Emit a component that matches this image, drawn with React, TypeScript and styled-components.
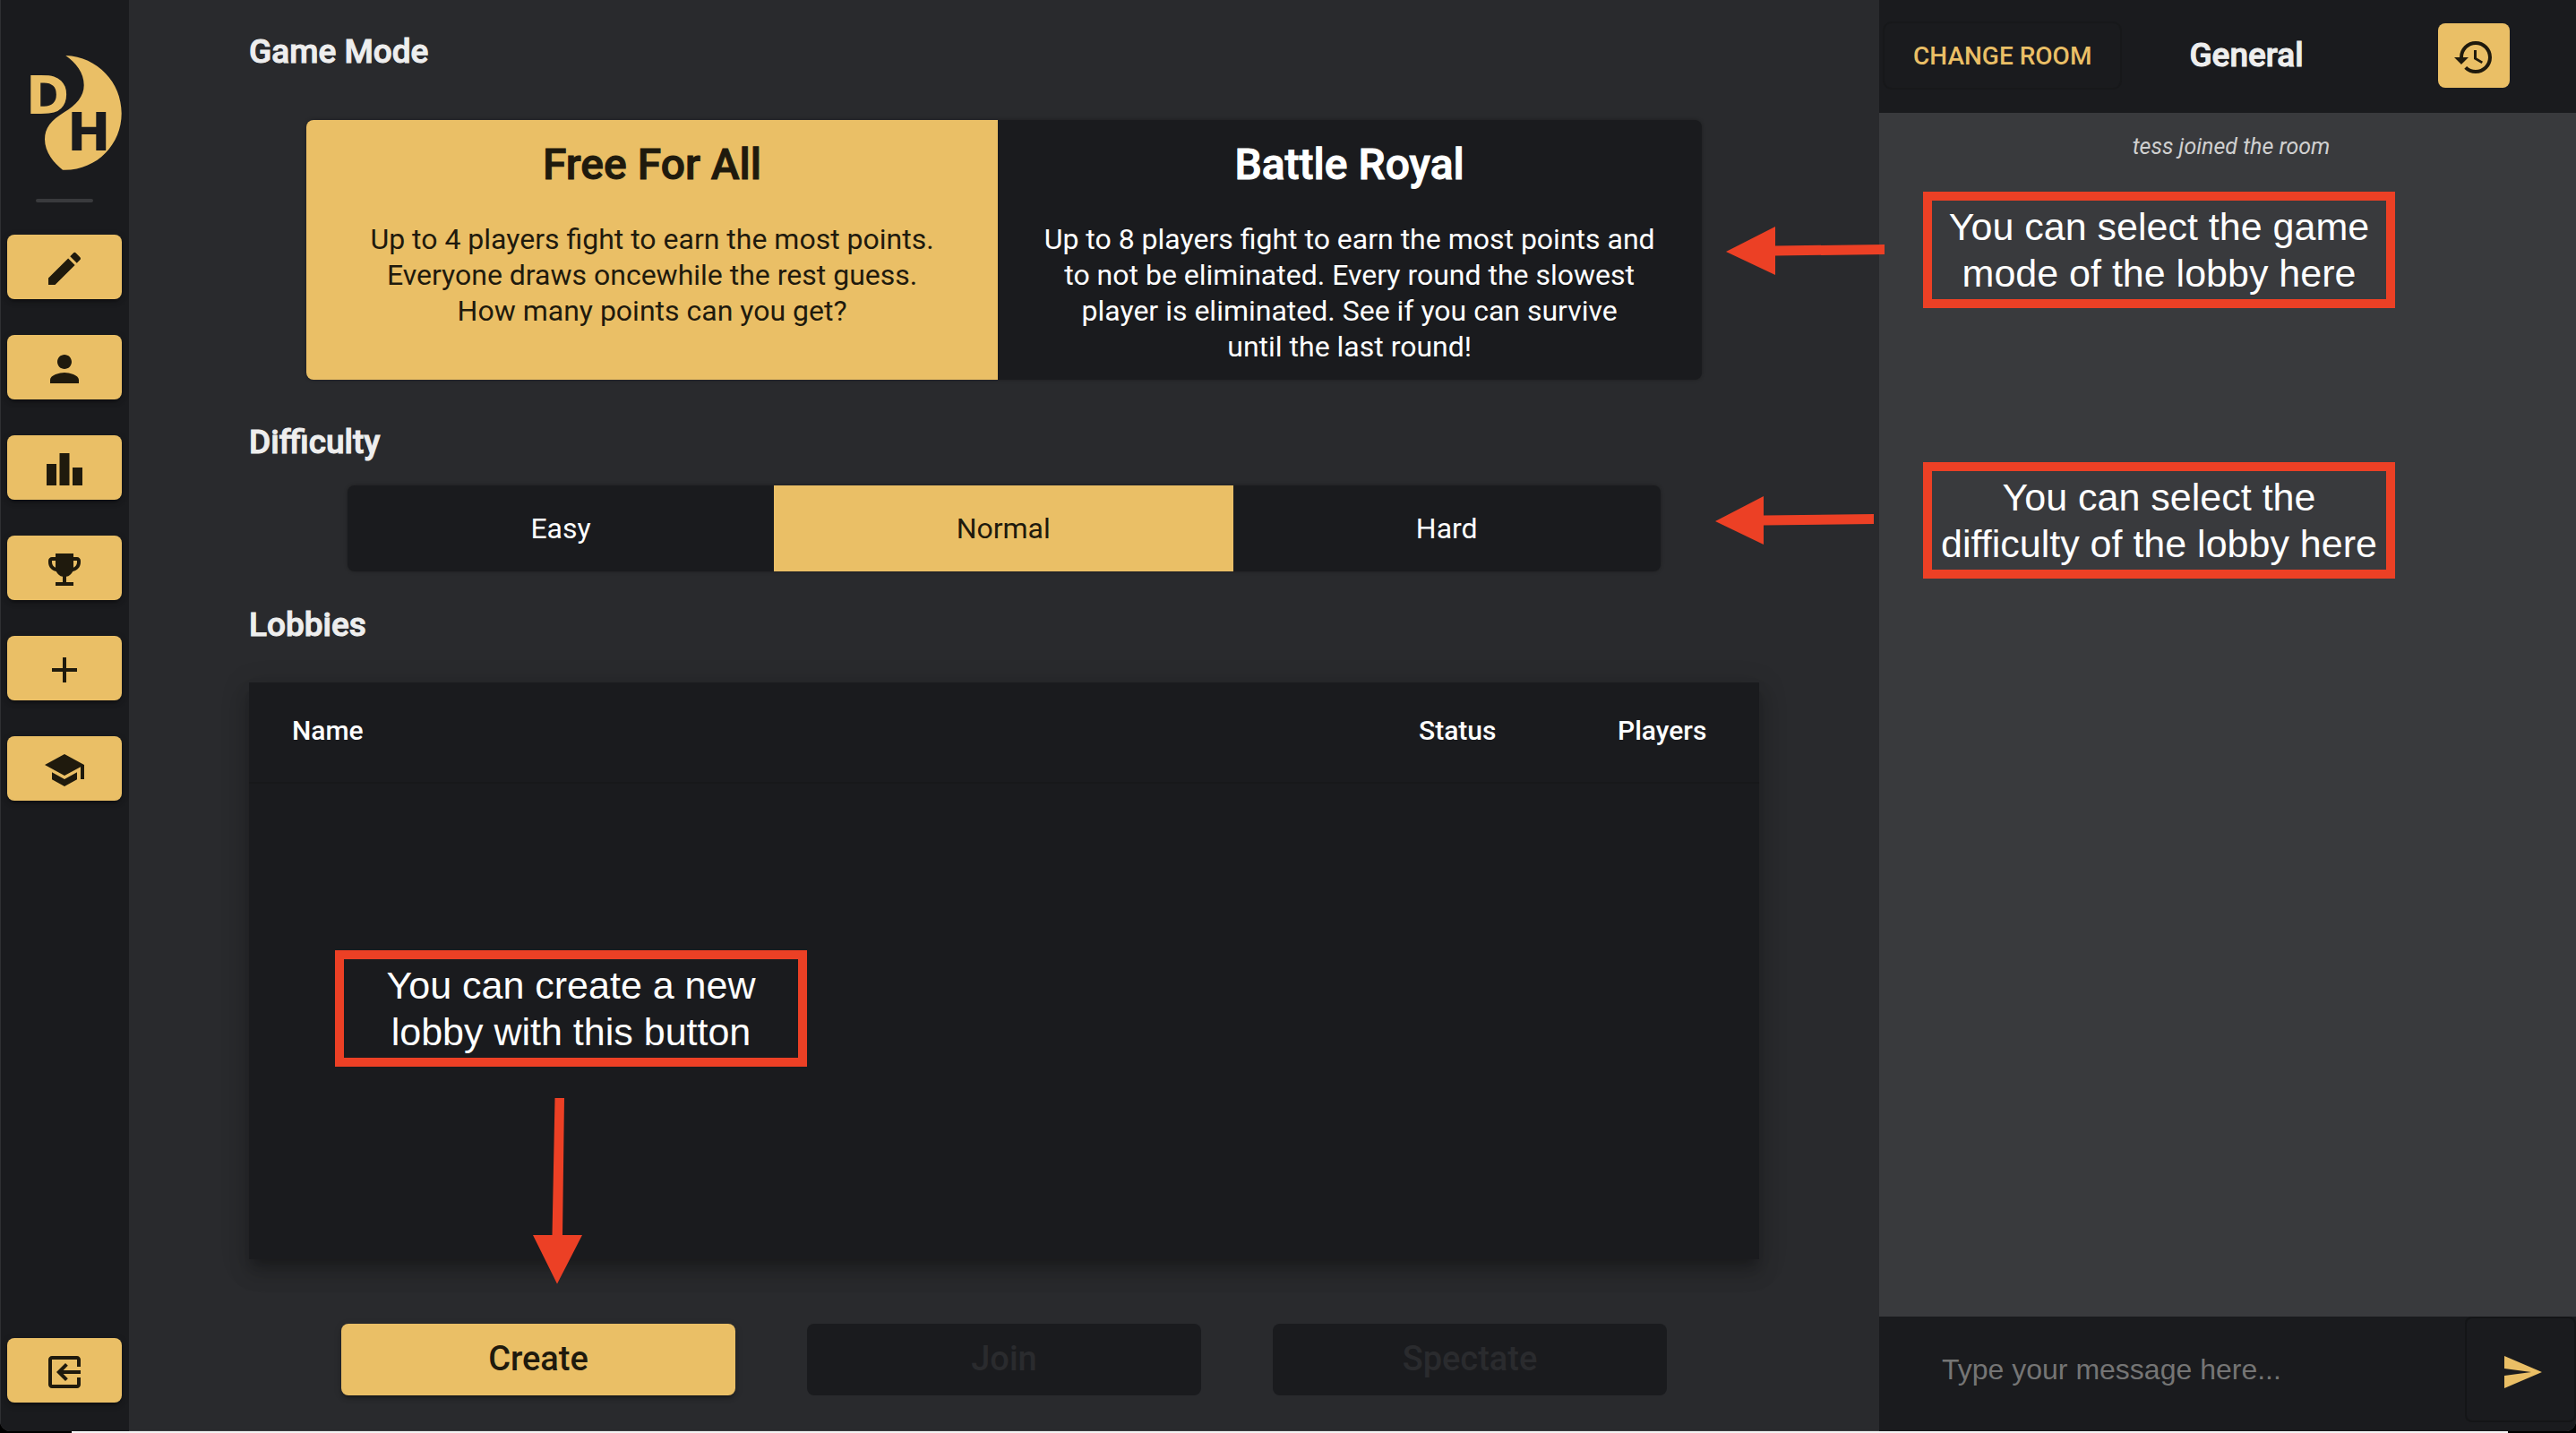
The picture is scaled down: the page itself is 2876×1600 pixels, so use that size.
import React, { useState } from "react";
import styled, { createGlobalStyle, css } from "styled-components";

const color = {
  panel: "#1a1b1e",
  page: "#292a2d",
  chat: "#393a3d",
  gold: "#eabf66",
  ink: "#1f1a0d",
  text: "#eeeeee",
  note: "#ec4025",
};

const raised =
  "0 6px 2px -4px rgba(0,0,0,.2), 0 4px 4px 0 rgba(0,0,0,.14), 0 2px 10px 0 rgba(0,0,0,.12)";

/* Medium Roboto thickened into a bold, keeping the narrower letter widths */
const heavy = css`
  font-weight: 500;
  -webkit-text-stroke: 1px currentColor;
`;

const GlobalStyle = createGlobalStyle`
  *, *::before, *::after { box-sizing: border-box; }
  body {
    margin: 0;
    background: #000;
    color: ${color.text};
    font-family: Roboto, "Liberation Sans", sans-serif;
    overflow: hidden;
  }
  button, input { font: inherit; border: 0; margin: 0; }
  button { cursor: pointer; }
  button:disabled { cursor: default; }
  h1, h2, h3, p { margin: 0; }
`;

const Screen = styled.div`
  position: relative;
  display: flex;
  flex-direction: column;
  height: 100vh;
`;

const Desk = styled.div`
  flex: none;
  height: 2px;
  margin: 0 76px 0 80px;
  background: #f4f4f4;
`;

const Window = styled.div`
  flex: 1;
  min-height: 0;
  display: grid;
  grid-template-columns: 144px 1fr 778px;
  background: ${color.page};
  border-radius: 0 0 12px 12px;
  box-shadow: inset 1px -1px 0 #3c3d40;
  overflow: hidden;
`;

const Sidebar = styled.nav`
  display: flex;
  flex-direction: column;
  align-items: center;
  padding-bottom: 32px;
  background: ${color.panel};
  box-shadow: inset 1px 0 0 #2f3033;
`;

const Logo = styled.svg`
  display: block;
  width: 144px;
  height: 222px;
`;

const Divider = styled.hr`
  width: 64px;
  height: 4px;
  margin: 0 0 36px;
  border: 0;
  border-radius: 2px;
  background: ${color.chat};
`;

const NavList = styled.div`
  display: flex;
  flex-direction: column;
  gap: 40px;
`;

const IconButton = styled.button<{ $width: number; $flat?: boolean }>`
  display: flex;
  align-items: center;
  justify-content: center;
  width: ${(p) => p.$width}px;
  height: 72px;
  padding: 4px 0 0;
  border-radius: 8px;
  background: ${color.gold};
  color: ${color.ink};
  box-shadow: ${(p) => (p.$flat ? "none" : raised)};
`;

const Spacer = styled.div`
  flex: 1;
`;

const Glyph = styled.svg`
  display: block;
  width: 48px;
  height: 48px;
  fill: currentColor;
`;

const Main = styled.main`
  display: flex;
  flex-direction: column;
  padding: 34px 134px 40px;
`;

const SectionTitle = styled.h2`
  font-size: 37px;
  line-height: 48px;
  ${heavy}
`;

const ToggleGroup = styled.div<{ $top: number; $bottom: number }>`
  align-self: center;
  display: flex;
  margin: ${(p) => p.$top}px 0 ${(p) => p.$bottom}px;
  border-radius: 8px;
  background: ${color.panel};
  box-shadow: 0 0 4px rgba(0, 0, 0, 0.3);
  overflow: hidden;
`;

const Toggle = styled.button`
  background: transparent;
  color: #fff;
  font-size: 32px;
  line-height: 40px;
  text-align: center;
  &[aria-pressed="true"] {
    background: ${color.gold};
    color: ${color.ink};
  }
`;

const ModeToggle = styled(Toggle)<{ $pad: number }>`
  display: flex;
  flex-direction: column;
  align-items: center;
  gap: 33px;
  height: 290px;
  padding: 20px ${(p) => p.$pad}px 0;
`;

const ModeTitle = styled.h3`
  font-size: 48px;
  line-height: 60px;
  ${heavy}
`;

const LevelToggle = styled(Toggle)`
  height: 96px;
  padding: 0 204px;
`;

const LobbyPanel = styled.div`
  flex: 1;
  margin-top: 40px;
  background: ${color.panel};
  box-shadow: 0 10px 10px -6px rgba(0, 0, 0, 0.2), 0 16px 20px 2px rgba(0, 0, 0, 0.14),
    0 6px 28px 4px rgba(0, 0, 0, 0.12);
`;

const Table = styled.table`
  width: 100%;
  border-collapse: collapse;
  table-layout: fixed;
`;

const HeadCell = styled.th<{ $width?: number; $left?: number }>`
  width: ${(p) => (p.$width ? `${p.$width}px` : "auto")};
  height: 112px;
  padding: 0 0 4px ${(p) => p.$left ?? 0}px;
  border-bottom: 2px solid #17181a;
  color: #fff;
  font-size: 30px;
  font-weight: 500;
  text-align: left;
`;

const Actions = styled.div`
  display: flex;
  justify-content: center;
  gap: 80px;
  margin-top: 72px;
`;

const ActionButton = styled.button`
  width: 440px;
  height: 80px;
  padding: 0 0 2px;
  border-radius: 8px;
  background: ${color.gold};
  color: ${color.ink};
  font-size: 38px;
  font-weight: 500;
  box-shadow: ${raised};
  &:disabled {
    background: ${color.panel};
    color: #2a2b2e;
    box-shadow: none;
  }
`;

const Chat = styled.aside`
  display: flex;
  flex-direction: column;
  background: ${color.chat};
`;

const ChatHeader = styled.header`
  display: flex;
  align-items: center;
  height: 126px;
  padding: 0 74px 2px 6px;
  background: ${color.panel};
`;

const RoomButton = styled.button`
  height: 72px;
  padding: 0 32px;
  border-radius: 8px;
  background: ${color.panel};
  color: ${color.gold};
  font-size: 28px;
  font-weight: 500;
  box-shadow: 0 0 0 2px #17181a;
`;

const RoomName = styled.h1`
  margin: 0 auto 0 77px;
  font-size: 37px;
  line-height: 48px;
  ${heavy}
`;

const Messages = styled.div`
  flex: 1;
  padding: 21px 0 0 8px;
`;

const SystemMessage = styled.p`
  color: #d0d0d0;
  font-size: 25px;
  line-height: 34px;
  font-style: italic;
  text-align: center;
`;

const Composer = styled.form`
  display: flex;
  height: 128px;
  background: ${color.panel};
`;

const MessageInput = styled.input`
  flex: 1;
  min-width: 0;
  height: 118px;
  padding: 0 20px 0 70px;
  background: transparent;
  color: ${color.text};
  font-family: "Liberation Sans", Arial, sans-serif;
  font-size: 32px;
  outline: 0;
  &::placeholder {
    color: #757575;
    opacity: 1;
  }
`;

const SendButton = styled.button`
  display: flex;
  align-items: center;
  justify-content: center;
  width: 124px;
  height: 118px;
  padding: 6px 0 0 4px;
  border-radius: 8px;
  background: ${color.panel};
  color: ${color.gold};
  box-shadow: inset 0 0 0 2px #141517;
`;

/* Guide notes that float over the screen */
const Note = styled.p<{ $top: number; $left?: number; $right?: number }>`
  position: absolute;
  top: ${(p) => p.$top}px;
  ${(p) => (p.$left !== undefined ? `left: ${p.$left}px;` : `right: ${p.$right}px;`)}
  width: 527px;
  height: 130px;
  padding-top: 3px;
  border: 10px solid ${color.note};
  color: #fff;
  font-family: "Liberation Sans", Arial, sans-serif;
  font-size: 43px;
  line-height: 52px;
  text-align: center;
  white-space: nowrap;
`;

const Arrow = styled.svg<{ $top: number; $left?: number; $right?: number }>`
  position: absolute;
  top: ${(p) => p.$top}px;
  ${(p) => (p.$left !== undefined ? `left: ${p.$left}px;` : `right: ${p.$right}px;`)}
  fill: ${color.note};
  pointer-events: none;
`;

const icons = {
  edit: "M3 17.25V21h3.75L17.81 9.94l-3.75-3.75L3 17.25zM20.71 7.04c.39-.39.39-1.02 0-1.41l-2.34-2.34a.996.996 0 0 0-1.41 0l-1.83 1.83 3.75 3.75 1.83-1.83z",
  person:
    "M12 12c2.21 0 4-1.79 4-4s-1.79-4-4-4-4 1.79-4 4 1.79 4 4 4zm0 2c-2.67 0-8 1.34-8 4v2h16v-2c0-2.66-5.33-4-8-4z",
  ranking: "M7.5 21H2V9h5.5v12zm7.25-18h-5.5v18h5.5V3zM22 11h-5.5v10H22V11z",
  trophy:
    "M19 5h-2V3H7v2H5c-1.1 0-2 .9-2 2v1c0 2.55 1.92 4.63 4.39 4.94.63 1.5 1.98 2.63 3.61 2.96V19H7v2h10v-2h-4v-3.1c1.63-.33 2.98-1.46 3.61-2.96C19.08 12.63 21 10.55 21 8V7c0-1.1-.9-2-2-2zM5 8V7h2v3.82C5.84 10.4 5 9.3 5 8zm14 0c0 1.3-.84 2.4-2 2.82V7h2v1z",
  add: "M19 13h-6v6h-2v-6H5v-2h6V5h2v6h6v2z",
  school: "M5 13.18v4L12 21l7-3.82v-4L12 17l-7-3.82zM12 3 1 9l11 6 9-4.91V17h2V9L12 3z",
  exit: "M13.91 15.59 12.5 17l-5-5 5-5 1.41 1.41L11.33 11H21v2h-9.67l2.58 2.59zM5 3h14c1.11 0 2 .9 2 2v4h-2V5H5v14h14v-4h2v4c0 1.1-.89 2-2 2H5c-1.1 0-2-.9-2-2V5c0-1.1.9-2 2-2z",
  history:
    "M13 3a9 9 0 0 0-9 9H1l3.89 3.89.07.14L9 12H6c0-3.87 3.13-7 7-7s7 3.13 7 7-3.13 7-7 7c-1.93 0-3.68-.79-4.94-2.06l-1.42 1.42A8.954 8.954 0 0 0 13 21a9 9 0 0 0 0-18zm-1 5v5l4.28 2.54.72-1.21-3.5-2.08V8H12z",
  send: "M2.01 21 23 12 2.01 3 2 10l15 2-15 2z",
};

type IconName = keyof typeof icons;

const Icon = ({ name }: { name: IconName }) => (
  <Glyph viewBox="0 0 24 24" aria-hidden="true">
    <path d={icons[name]} />
  </Glyph>
);

const navItems: { icon: IconName; label: string }[] = [
  { icon: "edit", label: "Draw" },
  { icon: "person", label: "Profile" },
  { icon: "ranking", label: "Leaderboard" },
  { icon: "trophy", label: "Trophies" },
  { icon: "add", label: "New drawing" },
  { icon: "school", label: "Tutorial" },
];

const modes = [
  {
    title: "Free For All",
    pad: 71,
    lines: [
      "Up to 4 players fight to earn the most points.",
      "Everyone draws oncewhile the rest guess.",
      "How many points can you get?",
    ],
  },
  {
    title: "Battle Royal",
    pad: 52,
    lines: [
      "Up to 8 players fight to earn the most points and",
      "to not be eliminated. Every round the slowest",
      "player is eliminated. See if you can survive",
      "until the last round!",
    ],
  },
];

const levels = ["Easy", "Normal", "Hard"];

const Lines = ({ lines }: { lines: string[] }) => (
  <>
    {lines.map((line, i) => (
      <React.Fragment key={line}>
        {i > 0 && <br />}
        {line}
      </React.Fragment>
    ))}
  </>
);

export default function App() {
  const [mode, setMode] = useState("Free For All");
  const [level, setLevel] = useState("Normal");
  const [message, setMessage] = useState("");

  return (
    <Screen>
      <GlobalStyle />
      <Window>
        <Sidebar>
          <Logo viewBox="0 0 144 222" role="img" aria-label="DH">
            <path
              fill={color.gold}
              d="M73.3 62C109 63.500 135.700 92 135.700 126.500C135.700 161 108 191 70 189.700C60 182 50 169.500 50 155.500C50 143 57 134.500 71.700 125.300C85 117 93.700 108 93.700 95C93.700 81.500 85 70 73.300 62Z"
            />
            <g fontFamily="DejaVu Sans, sans-serif" fontWeight="700" fontSize="58">
              <text x="29" y="127" fill={color.gold}>
                D
              </text>
              <text x="75" y="168" fill={color.panel}>
                H
              </text>
            </g>
          </Logo>
          <Divider />
          <NavList>
            {navItems.map((item) => (
              <IconButton key={item.icon} $width={128} aria-label={item.label}>
                <Icon name={item.icon} />
              </IconButton>
            ))}
          </NavList>
          <Spacer />
          <IconButton $width={128} aria-label="Log out">
            <Icon name="exit" />
          </IconButton>
        </Sidebar>

        <Main>
          <SectionTitle>Game Mode</SectionTitle>
          <ToggleGroup $top={52} $bottom={46} role="group" aria-label="Game Mode">
            {modes.map((m) => (
              <ModeToggle
                key={m.title}
                $pad={m.pad}
                aria-pressed={mode === m.title}
                onClick={() => setMode(m.title)}
              >
                <ModeTitle>{m.title}</ModeTitle>
                <p>
                  <Lines lines={m.lines} />
                </p>
              </ModeToggle>
            ))}
          </ToggleGroup>

          <SectionTitle>Difficulty</SectionTitle>
          <ToggleGroup $top={24} $bottom={36} role="group" aria-label="Difficulty">
            {levels.map((l) => (
              <LevelToggle key={l} aria-pressed={level === l} onClick={() => setLevel(l)}>
                {l}
              </LevelToggle>
            ))}
          </ToggleGroup>

          <SectionTitle>Lobbies</SectionTitle>
          <LobbyPanel>
            <Table>
              <thead>
                <tr>
                  <HeadCell $left={48}>Name</HeadCell>
                  <HeadCell $width={222}>Status</HeadCell>
                  <HeadCell $width={158}>Players</HeadCell>
                </tr>
              </thead>
              <tbody />
            </Table>
          </LobbyPanel>

          <Actions>
            <ActionButton>Create</ActionButton>
            <ActionButton disabled>Join</ActionButton>
            <ActionButton disabled>Spectate</ActionButton>
          </Actions>
        </Main>

        <Chat>
          <ChatHeader>
            <RoomButton>CHANGE ROOM</RoomButton>
            <RoomName>General</RoomName>
            <IconButton $width={80} $flat aria-label="Message history">
              <Icon name="history" />
            </IconButton>
          </ChatHeader>
          <Messages>
            <SystemMessage>tess joined the room</SystemMessage>
          </Messages>
          <Composer onSubmit={(e) => e.preventDefault()}>
            <MessageInput
              aria-label="Message"
              placeholder="Type your message here..."
              value={message}
              onChange={(e) => setMessage(e.target.value)}
            />
            <SendButton aria-label="Send">
              <Icon name="send" />
            </SendButton>
          </Composer>
        </Chat>
      </Window>
      <Desk />

      <Note $top={214} $right={202}>
        <Lines lines={["You can select the game", "mode of the lobby here"]} />
      </Note>
      <Arrow $top={252} $right={772} width="177" height="56" aria-hidden="true">
        <path d="M0 29L55 1V22.500L177 21V32L55 33.500V55Z" />
      </Arrow>

      <Note $top={516} $right={202}>
        <Lines lines={["You can select the", "difficulty of the lobby here"]} />
      </Note>
      <Arrow $top={553} $right={784} width="177" height="56" aria-hidden="true">
        <path d="M0 29L54 1V22.500L177 21V32L54 33.500V55Z" />
      </Arrow>

      <Note $top={1061} $left={374}>
        <Lines lines={["You can create a new", "lobby with this button"]} />
      </Note>
      <Arrow $top={1226} $left={595} width="56" height="208" aria-hidden="true">
        <path d="M24.500 0H35L33 153H55L27 207.500L0 153H21.500Z" />
      </Arrow>
    </Screen>
  );
}
